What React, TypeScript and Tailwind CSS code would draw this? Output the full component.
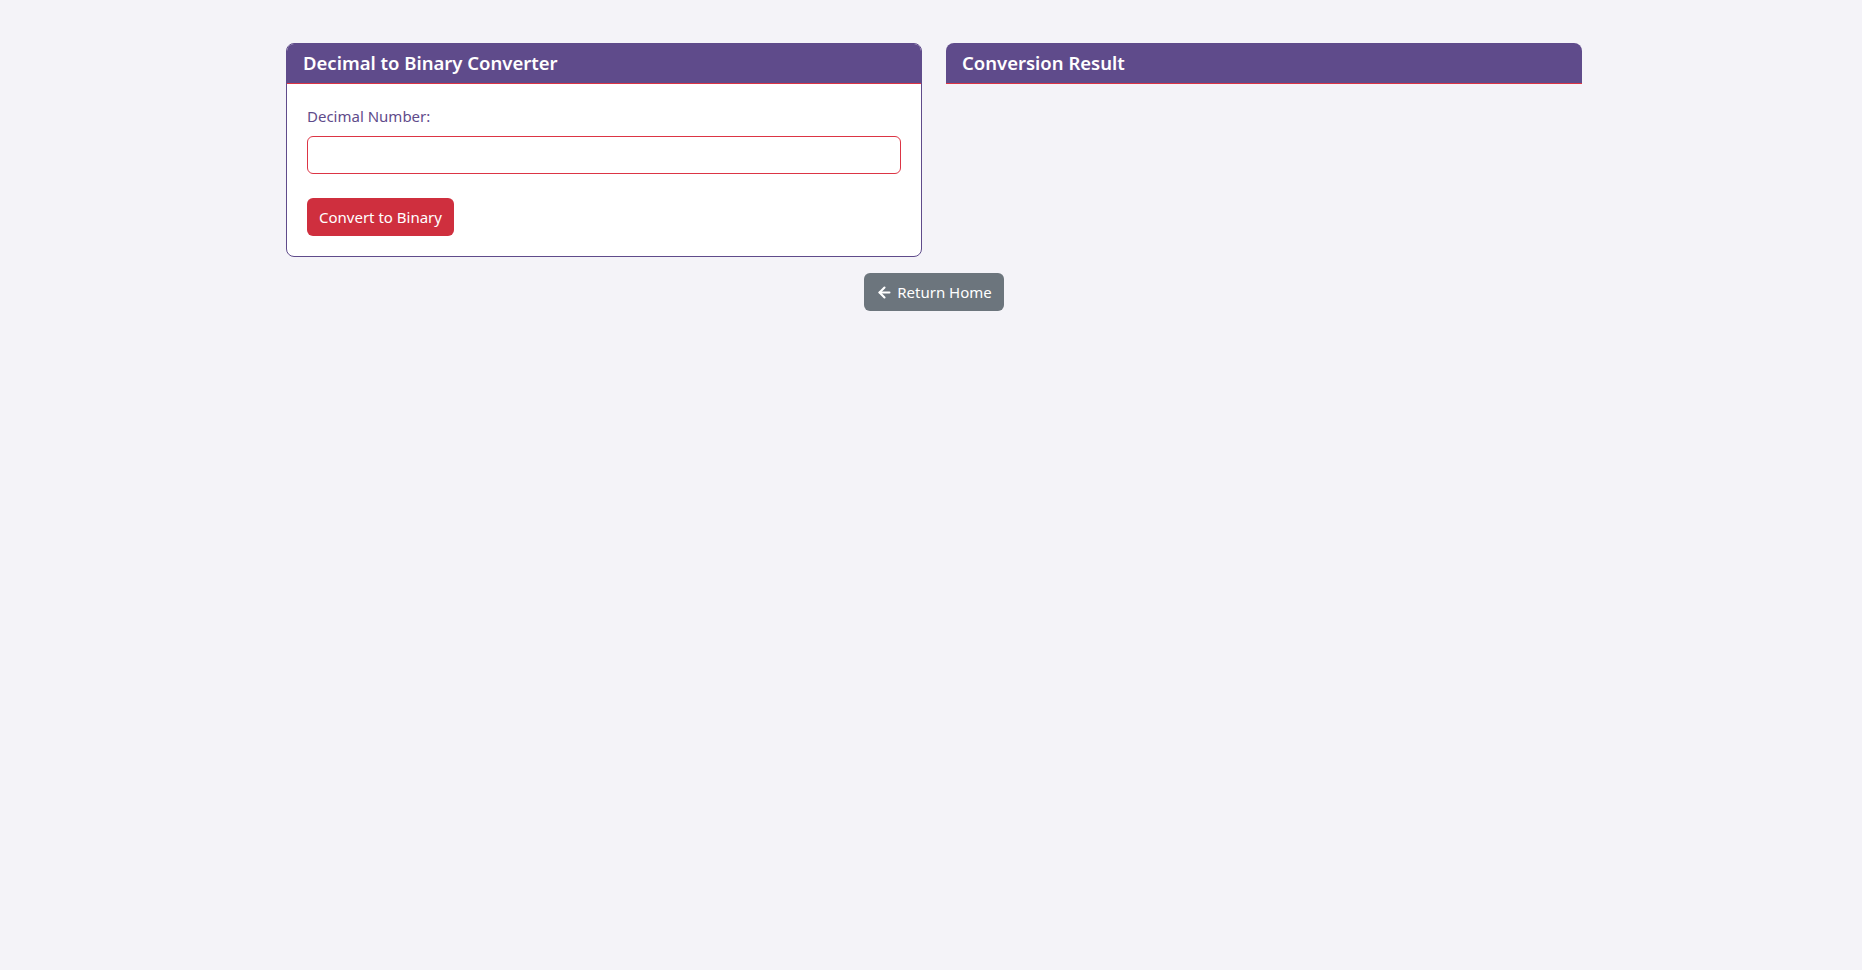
import { ArrowLeft } from "lucide-react";

export default function App() {
  return (
    <div
      className="min-h-screen w-full bg-[#f4f3f8] pt-[43px]"
      style={{ fontFamily: '"Noto Sans", "Open Sans", sans-serif' }}
    >
      <div className="mx-auto w-[1320px] pl-[15px] pr-[9px]">
        <div className="grid grid-cols-2 gap-6">
          {/* converter card */}
          <div className="overflow-hidden rounded-lg border border-[#5f4b8b] bg-white">
            <div className="flex h-[40px] items-center border-b border-[#dc3545] bg-[#5f4b8b] px-4">
              <h5 className="text-[18.5px] font-semibold leading-none text-white">Decimal to Binary Converter</h5>
            </div>
            <div className="p-5">
              <label className="mb-2 block text-[15px] leading-6 text-[#5f4b8b]">Decimal Number:</label>
              <input
                type="text"
                className="mb-6 block h-[38px] w-full rounded-md border border-[#dc3545] bg-white px-3 text-base outline-none"
              />
              <button className="h-[38px] rounded-md bg-[#cf2f3e] px-3 text-[15px] text-white">
                Convert to Binary
              </button>
            </div>
          </div>

          {/* result card */}
          <div className="self-start overflow-hidden rounded-t-lg">
            <div className="flex h-[41px] items-center border-b border-[#dc3545] bg-[#5f4b8b] px-4">
              <h5 className="text-[18.5px] font-semibold leading-none text-white">Conversion Result</h5>
            </div>
          </div>
        </div>

        <div className="mt-4 flex justify-center">
          <button className="flex h-[38px] items-center gap-1 rounded-md bg-[#6c757d] px-3 text-[15px] text-white">
            <ArrowLeft size={17} strokeWidth={3} />
            Return Home
          </button>
        </div>
      </div>
    </div>
  );
}
